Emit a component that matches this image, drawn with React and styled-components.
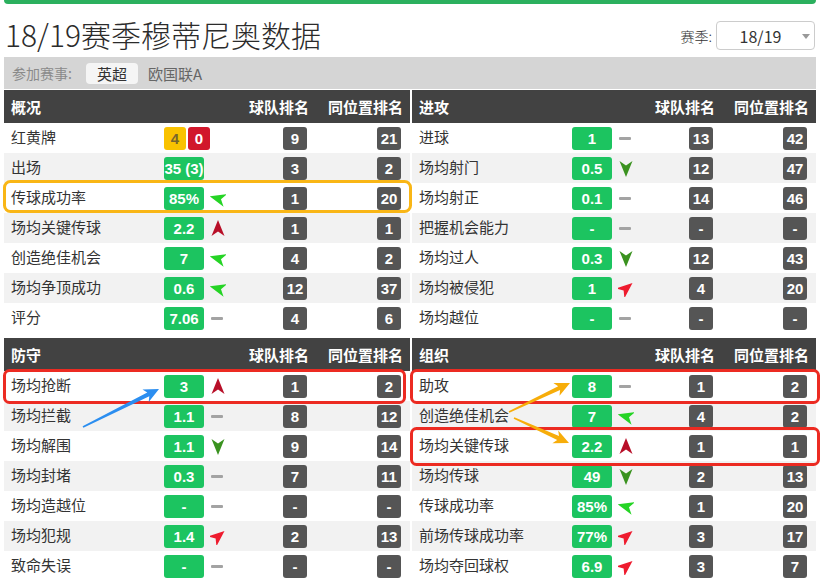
import React from "react"
import styled, { createGlobalStyle } from "styled-components"

const GlobalStyle = createGlobalStyle`
  body {
    margin: 0;
    background: #fff;
    font-family: "Noto Sans CJK SC", "Liberation Sans", sans-serif;
    color: #333;
  }
`

const Page = styled.div`
  position: relative;
  width: 823px;
  height: 584px;
  overflow: hidden;
  padding: 0 7px 0 4px;
  box-sizing: border-box;
`

const TopBar = styled.div`
  height: 4px;
  background: #2bb05e;
  border-radius: 0 0 5px 5px;
`

const TitleRow = styled.div`
  display: flex;
  align-items: flex-end;
  justify-content: space-between;
  height: 53px;
  padding-bottom: 7px;
  box-sizing: border-box;
`

const Title = styled.h1`
  margin: 0 0 0 1px;
  font-size: 30px;
  line-height: 32px;
  font-weight: 300;
  color: #2b2b2b;
  white-space: nowrap;
`

const SeasonPicker = styled.div`
  display: flex;
  align-items: center;
  gap: 4px;
  margin-right: 1px;
  font-size: 14px;
  font-weight: 300;
  color: #333;
`

const Select = styled.div`
  position: relative;
  width: 99px;
  height: 29px;
  box-sizing: border-box;
  border: 1px solid #ccc;
  border-radius: 4px;
  display: flex;
  align-items: center;
  justify-content: center;
  padding-right: 10px;
  font-size: 16px;
  font-weight: 400;
  color: #333;
  &::after {
    content: "";
    position: absolute;
    right: 4px;
    top: 12px;
    border-left: 4px solid transparent;
    border-right: 4px solid transparent;
    border-top: 5px solid #999;
  }
`

const FilterBar = styled.div`
  display: flex;
  align-items: center;
  height: 32px;
  background: #d5d5d5;
  padding-left: 8px;
  font-size: 15px;
`

const FilterLabel = styled.span`
  color: #8a8a8a;
  font-size: 14px;
`

const Tag = styled.span`
  margin-left: ${({ first }) => (first ? "14px" : "10px")};
  padding: ${({ active }) => (active ? "0 11px" : "0")};
  height: 21px;
  line-height: 21px;
  border-radius: 4px;
  background: ${({ active }) => (active ? "#f5f5f5" : "transparent")};
  color: ${({ active }) => (active ? "#333" : "#666")};
`

const Grid = styled.div`
  display: grid;
  grid-template-columns: 406px 404px;
  column-gap: 2px;
  row-gap: 5px;
  margin-top: 1px;
`

const Header = styled.div`
  display: grid;
  grid-template-columns: 1fr auto 94px;
  align-items: center;
  height: 33px;
  padding: 0 7px;
  background: #424242;
  color: #fff;
  font-size: 15px;
  font-weight: 700;
`

const HeadCell = styled.span`
  text-align: ${({ right }) => (right ? "right" : "left")};
`

const Row = styled.div`
  display: grid;
  grid-template-columns: 153px 46px 1fr 24px 94px;
  align-items: center;
  height: 30px;
  padding: 0 9px 0 7px;
  background: ${({ alt }) => (alt ? "#f2f2f2" : "#fff")};
`

const Label = styled.span`
  font-size: 15px;
  line-height: 28px;
  color: #333;
  white-space: nowrap;
  margin-top: -2px;
`

const ValueCell = styled.div`
  display: flex;
  gap: 2px;
`

const tones = {
  green: { bg: "#1cc460", fg: "#fff" },
  yellow: { bg: "#f9c200", fg: "#76642c" },
  red: { bg: "#d1172b", fg: "#fff" },
}

const Badge = styled.span`
  display: inline-flex;
  align-items: center;
  justify-content: center;
  width: ${({ w }) => w || 40}px;
  height: 23px;
  border-radius: 3px;
  background: ${({ tone }) => tones[tone || "green"].bg};
  color: ${({ tone }) => tones[tone || "green"].fg};
  font-family: "Liberation Sans", Arial, sans-serif;
  font-weight: 700;
  font-size: 15px;
  white-space: nowrap;
`

const RankBadge = styled.span`
  justify-self: ${({ end }) => (end ? "end" : "start")};
  display: inline-flex;
  align-items: center;
  justify-content: center;
  width: 24px;
  height: 23px;
  border-radius: 3px;
  background: #555;
  color: #fff;
  font-family: "Liberation Sans", Arial, sans-serif;
  font-weight: 700;
  font-size: 15px;
`

const Dash = styled.span`
  display: block;
  width: 12px;
  height: 3px;
  margin-left: 1px;
  border-radius: 1px;
  background: #a3a3a3;
`

const TrendSvg = styled.svg`
  display: block;
`

const trendStyles = {
  up: { color: "#b80f28", angle: 0 },
  down: { color: "#3a921f", angle: 180 },
  left: { color: "#25d425", angle: -75 },
  ne: { color: "#ee1b2e", angle: 50 },
}

const Trend = ({ type }) => {
  if (type === "flat") return <Dash />
  const t = trendStyles[type]
  return (
    <TrendSvg width="16" height="18" viewBox="0 0 16 18">
      <path
        d="M8 1 L14.5 17 L8 12.6 L1.5 17 Z"
        fill={t.color}
        transform={`rotate(${t.angle} 8 9.5)`}
      />
    </TrendSvg>
  )
}

const Overlay = styled.svg`
  position: absolute;
  top: 0;
  left: 0;
  pointer-events: none;
`

const arrowPoints = (x1, y1, x2, y2, head = 15, headW = 7, shaft = 2.2, tail = 0.8) => {
  const dx = x2 - x1
  const dy = y2 - y1
  const len = Math.hypot(dx, dy)
  const ux = dx / len
  const uy = dy / len
  const nx = -uy
  const ny = ux
  const bx = x2 - ux * head
  const by = y2 - uy * head
  const nbx = x2 - ux * (head - 3)
  const nby = y2 - uy * (head - 3)
  const p = (x, y) => `${x.toFixed(1)},${y.toFixed(1)}`
  return [
    p(x1 + nx * tail, y1 + ny * tail),
    p(nbx + nx * shaft, nby + ny * shaft),
    p(bx + nx * headW, by + ny * headW),
    p(x2, y2),
    p(bx - nx * headW, by - ny * headW),
    p(nbx - nx * shaft, nby - ny * shaft),
    p(x1 - nx * tail, y1 - ny * tail),
  ].join(" ")
}

const sections = [
  {
    title: "概况",
    rows: [
      { label: "红黄牌", cards: [4, 0], team: 9, pos: 21 },
      { label: "出场", value: "35 (3)", team: 3, pos: 2 },
      { label: "传球成功率", value: "85%", trend: "left", team: 1, pos: 20 },
      { label: "场均关键传球", value: "2.2", trend: "up", team: 1, pos: 1 },
      { label: "创造绝佳机会", value: "7", trend: "left", team: 4, pos: 2 },
      { label: "场均争顶成功", value: "0.6", trend: "left", team: 12, pos: 37 },
      { label: "评分", value: "7.06", trend: "flat", team: 4, pos: 6 },
    ],
  },
  {
    title: "进攻",
    rows: [
      { label: "进球", value: "1", trend: "flat", team: 13, pos: 42 },
      { label: "场均射门", value: "0.5", trend: "down", team: 12, pos: 47 },
      { label: "场均射正", value: "0.1", trend: "flat", team: 14, pos: 46 },
      { label: "把握机会能力", value: "-", trend: "flat", team: "-", pos: "-" },
      { label: "场均过人", value: "0.3", trend: "down", team: 12, pos: 43 },
      { label: "场均被侵犯", value: "1", trend: "ne", team: 4, pos: 20 },
      { label: "场均越位", value: "-", trend: "flat", team: "-", pos: "-" },
    ],
  },
  {
    title: "防守",
    rows: [
      { label: "场均抢断", value: "3", trend: "up", team: 1, pos: 2 },
      { label: "场均拦截", value: "1.1", trend: "flat", team: 8, pos: 12 },
      { label: "场均解围", value: "1.1", trend: "down", team: 9, pos: 14 },
      { label: "场均封堵", value: "0.3", trend: "flat", team: 7, pos: 11 },
      { label: "场均造越位", value: "-", trend: "flat", team: "-", pos: "-" },
      { label: "场均犯规", value: "1.4", trend: "ne", team: 2, pos: 13 },
      { label: "致命失误", value: "-", trend: "flat", team: "-", pos: "-" },
    ],
  },
  {
    title: "组织",
    rows: [
      { label: "助攻", value: "8", trend: "flat", team: 1, pos: 2 },
      { label: "创造绝佳机会", value: "7", trend: "left", team: 4, pos: 2 },
      { label: "场均关键传球", value: "2.2", trend: "up", team: 1, pos: 1 },
      { label: "场均传球", value: "49", trend: "down", team: 2, pos: 13 },
      { label: "传球成功率", value: "85%", trend: "left", team: 1, pos: 20 },
      { label: "前场传球成功率", value: "77%", trend: "ne", team: 3, pos: 17 },
      { label: "场均夺回球权", value: "6.9", trend: "ne", team: 3, pos: 7 },
    ],
  },
]

const StatSection = ({ title, rows }) => (
  <div>
    <Header>
      <HeadCell>{title}</HeadCell>
      <HeadCell right>球队排名</HeadCell>
      <HeadCell right>同位置排名</HeadCell>
    </Header>
    {rows.map((r, i) => (
      <Row key={r.label} alt={i % 2 === 1}>
        <Label>{r.label}</Label>
        <ValueCell>
          {r.cards ? (
            <>
              <Badge tone="yellow" w={24}>{r.cards[0]}</Badge>
              <Badge tone="red" w={24}>{r.cards[1]}</Badge>
            </>
          ) : (
            <Badge>{r.value}</Badge>
          )}
        </ValueCell>
        <div>{r.trend && <Trend type={r.trend} />}</div>
        <RankBadge>{r.team}</RankBadge>
        <RankBadge end>{r.pos}</RankBadge>
      </Row>
    ))}
  </div>
)

export default function App() {
  return (
    <>
      <GlobalStyle />
      <Page>
        <TopBar />
        <TitleRow>
          <Title>18/19赛季穆蒂尼奥数据</Title>
          <SeasonPicker>
            赛季:
            <Select>18/19</Select>
          </SeasonPicker>
        </TitleRow>
        <FilterBar>
          <FilterLabel>参加赛事:</FilterLabel>
          <Tag first active>英超</Tag>
          <Tag>欧国联A</Tag>
        </FilterBar>
        <Grid>
          {sections.map((s) => (
            <StatSection key={s.title} {...s} />
          ))}
        </Grid>
        <Overlay width="823" height="584" viewBox="0 0 823 584">
          <rect x="4.5" y="181.5" width="406" height="30" rx="6" fill="none" stroke="#f9b616" strokeWidth="3" />
          <rect x="4.5" y="370.5" width="400" height="32" rx="5" fill="none" stroke="#ec2b22" strokeWidth="3" />
          <rect x="411.5" y="370.5" width="407" height="32" rx="5" fill="none" stroke="#ec2b22" strokeWidth="3" />
          <rect x="411.5" y="428.5" width="407" height="36" rx="5" fill="none" stroke="#ec2b22" strokeWidth="3" />
          <polygon points={arrowPoints(83, 427, 159, 389)} fill="#2b8ef0" />
          <polygon points={arrowPoints(509, 412, 570, 383)} fill="#f7ad0a" />
          <polygon points={arrowPoints(514, 418, 569, 443)} fill="#f7ad0a" />
        </Overlay>
      </Page>
    </>
  )
}
